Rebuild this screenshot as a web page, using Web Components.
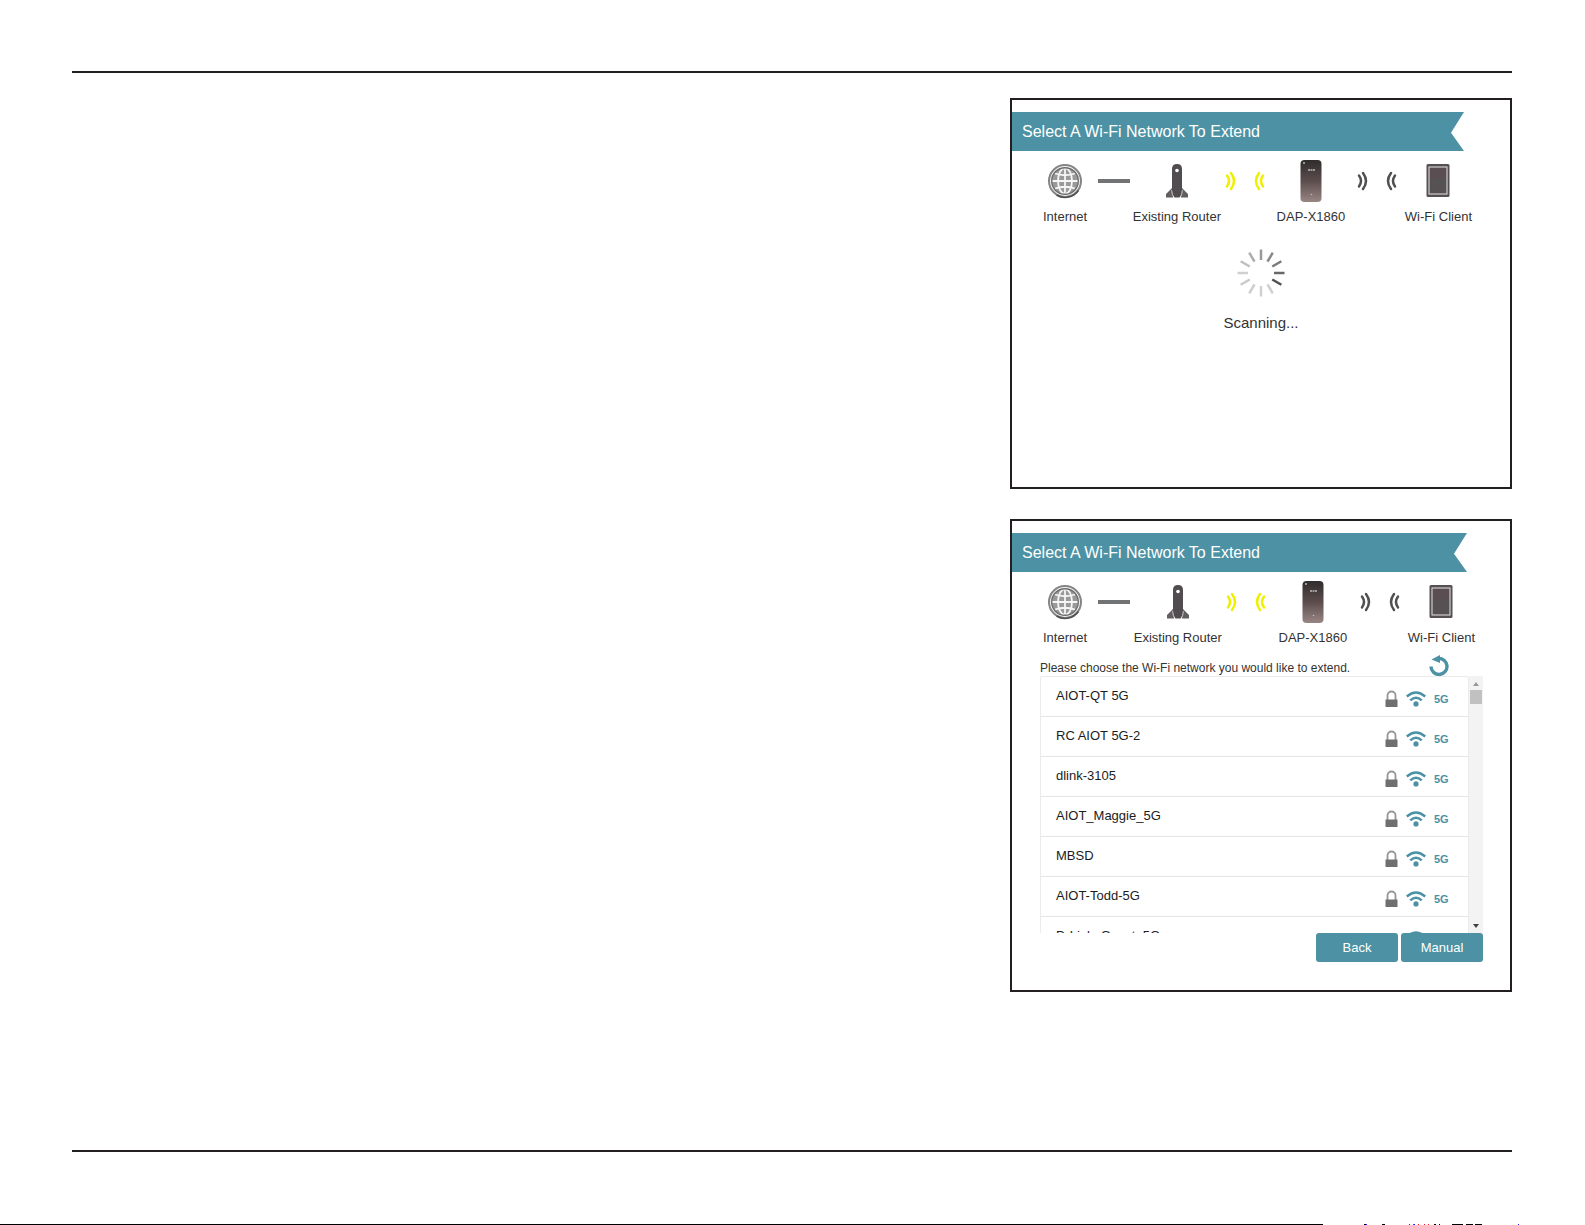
<!DOCTYPE html>
<html lang="en">
<head>
<meta charset="utf-8">
<meta name="viewport" content="width=device-width, initial-scale=1">
<title>Select A Wi-Fi Network To Extend</title>
<style>
  body {
    margin: 0;
    background: #fff;
    color: #333;
    font-family: "Liberation Sans", Arial, sans-serif;
  }
</style>
</head>
<body>
  <manual-page>
    <setup-panel heading="Select A Wi-Fi Network To Extend" size="tall">
      <network-path></network-path>
      <scan-status>Scanning...</scan-status>
    </setup-panel>

    <setup-panel heading="Select A Wi-Fi Network To Extend">
      <network-path wide></network-path>
      <network-picker>
        <span slot="hint">Please choose the Wi-Fi network you would like to extend.</span>
        <network-row locked band="5G">AIOT-QT 5G</network-row>
        <network-row locked band="5G">RC AIOT 5G-2</network-row>
        <network-row locked band="5G">dlink-3105</network-row>
        <network-row locked band="5G">AIOT_Maggie_5G</network-row>
        <network-row locked band="5G">MBSD</network-row>
        <network-row locked band="5G">AIOT-Todd-5G</network-row>
        <network-row>D-Link_Guest_5G</network-row>
      </network-picker>
      <button-bar>
        <action-button>Back</action-button>
        <action-button>Manual</action-button>
      </button-bar>
    </setup-panel>
  </manual-page>

<script>
//
// HELPERS
//
const makeTemplate = (html) => {
  const template = document.createElement("template");
  template.innerHTML = html;
  return template;
};

const attach = (element, template) => {
  const root = element.attachShadow({ mode: "open" });
  root.appendChild(template.content.cloneNode(true));
  return root;
};

//
// TEMPLATES
//
const pageTemplate = makeTemplate(`
    <style>
    :host {
        display:flex;
        flex-direction:column;
        box-sizing:border-box;
        min-height:100vh;
        padding-top:71px;
    }
    main {
        flex-grow:1;
        margin:0 73px 0 72px;
        border-top:2px solid #231f20;
        border-bottom:2px solid #231f20;
        display:grid;
        grid-template-columns:938fr 502fr;
    }
    .figures {
        grid-column:2;
        padding:25px 0;
        display:flex;
        flex-direction:column;
        gap:30px;
    }
    .edge {
        height:1px;
        width:100%;
        margin-top:72px;
        display:block;
    }
    </style>
    <main>
        <div class="figures"><slot></slot></div>
    </main>
    <svg class="edge" viewBox="0 0 1585 1" preserveAspectRatio="none" shape-rendering="crispEdges" aria-hidden="true">
        <path d="M0 0h1323v1H0zM1364 0h2v1h-2zM1382 0h3v1h-3zM1434 0h2v1h-2zM1439 0h1v1h-1zM1452 0h11v1h-11zM1466 0h7v1h-7zM1475 0h7v1h-7z" fill="#000"/>
        <path d="M1366 0h1v1h-1zM1409 0h1v1h-1zM1414 0h1v1h-1zM1518 0h1v1h-1z" fill="#22f"/>
        <path d="M1413 0h1v1h-1zM1418 0h1v1h-1zM1424 0h1v1h-1zM1428 0h1v1h-1z" fill="#e22"/>
    </svg>
`);

const panelTemplate = makeTemplate(`
    <style>
    :host {
        display:block;
        box-sizing:border-box;
        border:2px solid #231f20;
        padding:12px 0 28px;
    }
    :host([size="tall"]) {
        min-height:391px;
    }
    h2 {
        margin:0 43px 0 0;
        padding:0 10px;
        height:39px;
        line-height:40px;
        background:#4c92a4;
        color:#fff;
        font-size:16px;
        font-weight:normal;
        clip-path:polygon(0 0, 100% 0, calc(100% - 13px) 53%, 100% 100%, 0 100%);
    }
    :host([size="tall"]) h2 {
        margin-right:46px;
    }
    </style>
    <h2></h2>
    <slot></slot>
`);

const pathTemplate = makeTemplate(`
    <style>
    :host {
        display:flex;
        padding:8px 38px 0 31px;
    }
    :host([wide]) {
        padding-right:35px;
    }
    svg {
        display:block;
    }
    .node {
        display:flex;
        flex-direction:column;
        align-items:center;
        gap:6px;
        font-size:13px;
        line-height:16px;
        white-space:nowrap;
    }
    .link {
        height:44px;
        display:flex;
        align-items:center;
        justify-content:center;
        box-sizing:border-box;
        flex:1 1 46px;
        padding-left:8px;
    }
    .link--in {
        flex-basis:56px;
        padding:0 8px 0 0;
    }
    .link--out {
        flex-basis:60px;
        padding-left:4px;
    }
    .link--in svg {
        stroke:#eef000;
    }
    .link--out svg {
        stroke:#505050;
    }
    </style>
    <div class="node">
        <svg width="36" height="44" viewBox="0 0 36 44" fill="none">
            <circle cx="18" cy="22" r="16" fill="#f4f4f4" stroke="#858585" stroke-width="2"/>
            <path d="M31.500 31.500a16.500 16.500 0 0 1 -22 4.500" stroke="#505050" stroke-width="1.500"/>
            <circle cx="18" cy="22" r="13" fill="#9a9a9a"/>
            <g stroke="#f6f6f6" stroke-width="1.800">
                <path d="M18 9v26M5 22h26M8 14.500q10 3.500 20 0M8 29.500q10 -3.500 20 0"/>
                <ellipse cx="18" cy="22" rx="7" ry="13"/>
            </g>
            <circle cx="18" cy="22" r="13.300" stroke="#6c6c6c" stroke-width="1.400"/>
        </svg>
        <span>Internet</span>
    </div>
    <div class="link">
        <svg width="32" height="4"><rect width="32" height="4" fill="#717375"/></svg>
    </div>
    <div class="node">
        <svg width="24" height="44" viewBox="0 0 24 44">
            <path d="M7 29L1 35v3.500h7zM17 29l6 6v3.500h-7z" fill="#625d5f"/>
            <path d="M7 10q0 -5 5 -5t5 5v22q0 4 -2.500 6.500h-5Q7 36 7 32z" fill="#514c4f"/>
            <path d="M6.600 31q0 4.500 2.400 7.500M17.400 31q0 4.500 -2.400 7.500" fill="none" stroke="#d4d2d3" stroke-width=".8"/>
            <circle cx="12" cy="11.500" r="1.800" fill="#fff"/>
        </svg>
        <span>Existing Router</span>
    </div>
    <div class="link link--in">
        <svg width="40" height="20" viewBox="0 0 40 20" fill="none" stroke-width="2.500" stroke-linecap="round">
            <path d="M2 4.500q4 5.500 0 11M6 2q6 8 0 16M38 4.500q-4 5.500 0 11M34 2q-6 8 0 16"/>
        </svg>
    </div>
    <div class="node">
        <svg width="22" height="44" viewBox="0 0 22 44">
            <defs>
                <linearGradient id="body" x2="0" y2="1">
                    <stop offset="0" stop-color="#302c2d"/>
                    <stop offset=".5" stop-color="#5c4d4d"/>
                    <stop offset="1" stop-color="#988684"/>
                </linearGradient>
            </defs>
            <rect x="0.500" y="1" width="21" height="42" rx="4" fill="url(#body)"/>
            <circle cx="4" cy="4" r="1" fill="#bbb"/>
            <path d="M8 11h7" stroke="#bbb" stroke-width="1.500" stroke-dasharray="2 .5"/>
            <circle cx="11.500" cy="35.500" r=".8" fill="#c8bcba"/>
        </svg>
        <span>DAP-X1860</span>
    </div>
    <div class="link link--out">
        <svg width="40" height="20" viewBox="0 0 40 20" fill="none" stroke-width="2.500" stroke-linecap="round">
            <path d="M2 4.500q4 5.500 0 11M6 2q6 8 0 16M38 4.500q-4 5.500 0 11M34 2q-6 8 0 16"/>
        </svg>
    </div>
    <div class="node">
        <svg width="24" height="44" viewBox="0 0 24 44">
            <rect x="0.500" y="5" width="23" height="33" rx="1.500" fill="#575052"/>
            <rect x="3" y="8" width="18" height="27" fill="#565152" stroke="#e6e2e3" stroke-width="1"/>
            <path d="M4 9h16v10H4z" fill="#5a4e52"/>
        </svg>
        <span>Wi-Fi Client</span>
    </div>
`);

const scanTemplate = makeTemplate(`
    <style>
    :host {
        display:flex;
        flex-direction:column;
        align-items:center;
        gap:16px;
        padding-top:24px;
        font-size:15px;
        line-height:20px;
    }
    </style>
    <svg width="48" height="48" viewBox="-24 -24 48 48" stroke-width="2.500" aria-hidden="true"></svg>
    <span><slot></slot></span>
`);

const pickerTemplate = makeTemplate(`
    <style>
    :host {
        display:block;
        margin:9px 27px 0 28px;
    }
    .top {
        display:flex;
        align-items:flex-end;
        justify-content:space-between;
        padding-right:34px;
        font-size:12px;
        line-height:16px;
    }
    .refresh {
        border:0;
        padding:0;
        background:none;
        height:21px;
        cursor:pointer;
    }
    .refresh svg {
        display:block;
    }
    .box {
        display:flex;
        height:257px;
        overflow:hidden;
    }
    .rows {
        flex-grow:1;
        box-sizing:border-box;
        border:1px solid #ebebeb;
        border-bottom:0;
        border-top-left-radius:3px;
        border-top-right-radius:3px;
        overflow:hidden;
    }
    .scroll {
        width:14px;
        padding:6px 1px 5px;
        box-sizing:border-box;
        background:#f3f3f3;
        display:flex;
        flex-direction:column;
        align-items:center;
    }
    .thumb {
        width:12px;
        height:14px;
        margin:4px 0 auto;
        background:#c1c1c1;
    }
    </style>
    <div class="top">
        <slot name="hint"></slot>
        <button class="refresh" type="button" aria-label="Scan again">
            <svg width="20" height="21" viewBox="0 0 20 21" fill="none">
                <path d="M2 11.500a8 8 0 1 0 7 -8" stroke="#4c92a4" stroke-width="3.400"/>
                <path d="M2.500 4.500L11 0v8z" fill="#4c92a4"/>
            </svg>
        </button>
    </div>
    <div class="box">
        <div class="rows" role="list"><slot></slot></div>
        <div class="scroll" aria-hidden="true">
            <svg width="6" height="4"><path d="M0 4L3 0l3 4z" fill="#999"/></svg>
            <div class="thumb"></div>
            <svg width="6" height="4"><path d="M0 0h6L3 4z" fill="#404040"/></svg>
        </div>
    </div>
`);

const rowTemplate = makeTemplate(`
    <style>
    :host {
        display:flex;
        align-items:center;
        box-sizing:border-box;
        height:40px;
        padding:0 19px 0 15px;
        border-bottom:1px solid #e6e6e6;
        color:#1c1c1c;
        font-size:13px;
        line-height:16px;
    }
    .ssid {
        flex-grow:1;
        padding-bottom:2px;
    }
    .icons {
        display:flex;
        align-items:center;
        gap:8px;
        padding-top:4px;
    }
    .lock {
        visibility:hidden;
    }
    :host([locked]) .lock {
        visibility:visible;
    }
    .band {
        min-width:15px;
        color:#4c92a4;
        font-size:11px;
        font-weight:bold;
    }
    </style>
    <span class="ssid"><slot></slot></span>
    <span class="icons">
        <svg class="lock" width="13" height="18" viewBox="0 0 13 18">
            <path d="M2.500 10V5.500a4 4 0 0 1 8 0V10" fill="none" stroke="#969696" stroke-width="1.800"/>
            <path d="M.5 9.500h12V17H.5z" fill="#6f6f6f"/>
        </svg>
        <svg width="20" height="16" viewBox="0 0 20 16" fill="none" stroke="#4c92a4" stroke-width="2.400">
            <path d="M.8 5.500q9.200 -8 18.400 0M4.300 9.300q5.700 -5 11.400 0"/>
            <circle cx="10" cy="12.900" r="2.600" fill="#4c92a4" stroke="none"/>
        </svg>
        <span class="band"></span>
    </span>
`);

const buttonBarTemplate = makeTemplate(`
    <style>
    :host {
        display:flex;
        justify-content:flex-end;
        gap:3px;
        margin-right:27px;
    }
    </style>
    <slot></slot>
`);

const buttonTemplate = makeTemplate(`
    <style>
    :host {
        display:block;
    }
    button {
        display:block;
        width:82px;
        height:29px;
        padding:0;
        border:0;
        border-radius:3px;
        background:#4c92a4;
        color:#fff;
        font:13px/29px "Liberation Sans", Arial, sans-serif;
        cursor:pointer;
    }
    </style>
    <button type="button"><slot></slot></button>
`);

//
// ELEMENTS
//
customElements.define(
  "manual-page",
  class extends HTMLElement {
    connectedCallback() {
      attach(this, pageTemplate);
    }
  }
);

customElements.define(
  "setup-panel",
  class extends HTMLElement {
    connectedCallback() {
      const root = attach(this, panelTemplate);
      root.querySelector("h2").textContent = this.getAttribute("heading");
    }
  }
);

customElements.define(
  "network-path",
  class extends HTMLElement {
    connectedCallback() {
      attach(this, pathTemplate);
    }
  }
);

customElements.define(
  "scan-status",
  class extends HTMLElement {
    connectedCallback() {
      const root = attach(this, scanTemplate);
      // clockwise, starting at 12 o'clock
      const shades = [
        "#999", "#8a8a8a", "#7a7a7a", "#686868", "#505050", "#d0d0d0",
        "#d0d0d0", "#cdcdcd", "#cacaca", "#d0d0d0", "#c0c0c0", "#adadad",
      ];
      root.querySelector("svg").innerHTML = shades
        .map(
          (shade, i) =>
            `<path d="M0 -13V-23.500" stroke="${shade}" transform="rotate(${i * 30})"/>`
        )
        .join("");
    }
  }
);

customElements.define(
  "network-picker",
  class extends HTMLElement {
    connectedCallback() {
      attach(this, pickerTemplate);
    }
  }
);

customElements.define(
  "network-row",
  class extends HTMLElement {
    connectedCallback() {
      this.setAttribute("role", "listitem");
      const root = attach(this, rowTemplate);
      root.querySelector(".band").textContent = this.getAttribute("band") || "";
    }
  }
);

customElements.define(
  "button-bar",
  class extends HTMLElement {
    connectedCallback() {
      attach(this, buttonBarTemplate);
    }
  }
);

customElements.define(
  "action-button",
  class extends HTMLElement {
    connectedCallback() {
      attach(this, buttonTemplate);
    }
  }
);
</script>
</body>
</html>
